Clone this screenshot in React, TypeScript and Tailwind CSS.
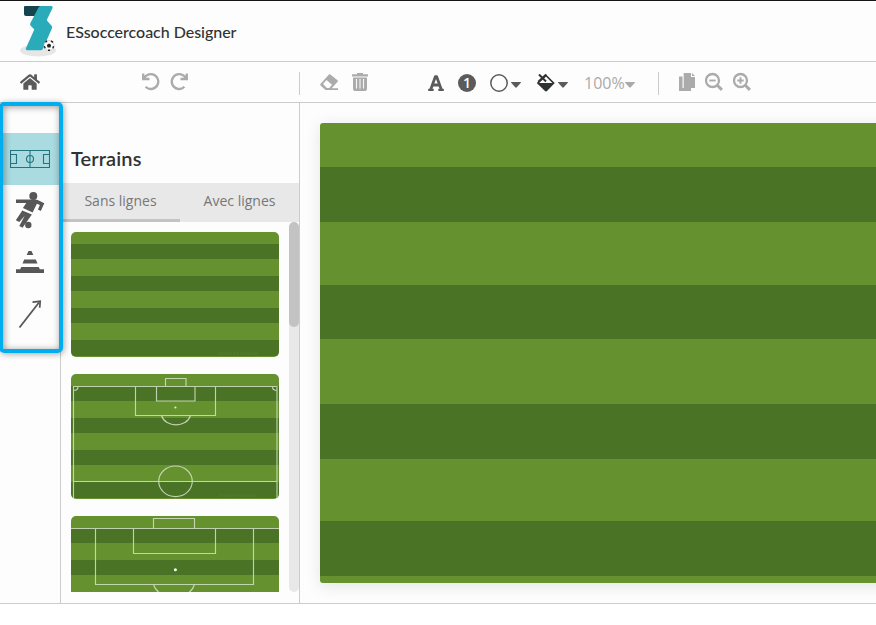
import type { ReactNode } from "react";
import { FaHome, FaFont } from "react-icons/fa";

const LIGHT = "#66912f";
const DARK = "#4a7326";

function Icon({ w, className = "", children }: { w: number; className?: string; children: ReactNode }) {
  return (
    <svg width={w} height={20} viewBox={`0 0 ${w} 20`} fill="none" className={`shrink-0 ${className}`}>
      {children}
    </svg>
  );
}

function Caret({ className = "" }: { className?: string }) {
  return (
    <Icon w={10} className={className}>
      <path d="M.5 10h9q.8 0 .3.8L5.8 15.300q-.8.800-1.600 0L.2 10.800Q-.3 10 .5 10Z" fill="currentColor" />
    </Icon>
  );
}

function Logo() {
  return (
    <svg width={38} height={52} viewBox="0 0 38 52" className="mt-[4px] ml-[19px] shrink-0">
      <ellipse cx="19" cy="45.500" rx="18" ry="6" fill="#e6e6e6" />
      <path d="M6 1h17l-5.500 10H7q-2 0-2-2V2q0-1 1-1Z" fill="#14444d" />
      <path
        d="M21.500 1H32q2.300 0 1.400 2.200L28 14.500q-.3.800.3 1.500l4.300 4.800q1 1.200.3 2.700L23.800 44q-.6 1.200-2 1.200H8.500q-2.400 0-1.500-2.200L15.300 24.500l-3.600-3.700q-1-1.100-.4-2.600L19.500 2.500Q20.300 1 21.500 1Z"
        fill="#2aabb9"
      />
      <circle cx="30" cy="40.500" r="5" fill="#fff" stroke="#bbb" strokeWidth=".6" />
      <path d="m30 38.500 2.200 1.500-.8 2.500h-2.800l-.8-2.500Z" fill="#222" />
      <path d="M26.500 37.200l1.500-1.300M32 35.900l2 1.500M25.300 41.200l.9 2M34.700 41.200l-.9 2M29 45.200h2" stroke="#222" strokeWidth="1.500" />
    </svg>
  );
}

const STRIPES = "bg-[linear-gradient(#66912f_0_12px,#4a7326_12px_27px,#66912f_27px_44px,#4a7326_44px_59px,#66912f_59px_76px,#4a7326_76px_91px,#66912f_91px_108px,#4a7326_108px_124px,#66912f_124px)]";

function Thumb({ children }: { children?: ReactNode }) {
  return (
    <div className={`h-[125px] w-[208px] shrink-0 overflow-hidden rounded-[5px] ${STRIPES}`}>
      <svg width={208} height={125} fill="none" stroke="#d5e2c6" strokeOpacity={0.85} strokeWidth={1.15}>
        <path d="M148 121.500h39" stroke="#5a823a" strokeWidth="3" strokeDasharray="3 1 2 1" opacity=".35" />
        {children}
      </svg>
    </div>
  );
}

const bands: [number, string][] = [
  [44, LIGHT],
  [55, DARK],
  [63, LIGHT],
  [54, DARK],
  [65, LIGHT],
  [55, DARK],
  [62, LIGHT],
  [55, DARK],
  [7, LIGHT],
];

function Toolbar() {
  return (
    <div className="flex h-[41px] items-center border-b border-[#ccc] text-[#5b5b5b]">
      <FaHome className="ml-[20px] h-[20px] w-[20px] shrink-0" />
      <div className="ml-[101px] flex gap-[9px] text-[#ababab]">
        <Icon w={19}>
          <path d="M2.200 1.500V7h6.300M3 6.300C4.700 3.500 7 2.200 10 2.200a7.400 7.400 0 1 1-5.400 12.600" stroke="currentColor" strokeWidth="2.300" />
        </Icon>
        <Icon w={19}>
          <path d="M17.800 1.500V7h-6.300M17 6.300C15.300 3.500 13 2.200 10 2.200a7.400 7.400 0 1 0 5.400 12.600" stroke="currentColor" strokeWidth="2.300" />
        </Icon>
      </div>
      <div className="ml-[111px] h-[23px] w-px shrink-0 translate-y-px bg-[#ccc]" />
      <div className="ml-[20px] flex gap-[13px] text-[#ababab]">
        <Icon w={19}>
          <path
            d="m10.300 2.400 7.200 5.800q.8.700.1 1.500l-5.900 6.500H18V18H5.500L.8 13.800Q-.3 12.700.8 11.600L9 2.500q.6-.7 1.300-.1ZM6.500 8 3 12l3.900 4h2.400l2.700-3.200Z"
            fill="currentColor"
            fillRule="evenodd"
          />
        </Icon>
        <Icon w={16}>
          <path d="M0 2.200h5V1h6v1.200h5V4.500H0ZM1 5.500h14V17q0 2-2 2H3q-2 0-2-2Z" fill="currentColor" />
          <path d="M4.500 7v9.500M8 7v9.500M11.500 7v9.500" stroke="#f6f6f6" strokeWidth="1.100" />
        </Icon>
      </div>
      <FaFont className="ml-[60px] h-[18px] w-[16px] shrink-0 translate-y-px" />
      <div className="ml-[14px] flex h-[18px] w-[18px] shrink-0 translate-y-px items-center justify-center rounded-full bg-[#5b5b5b] font-['Open_Sans',sans-serif] text-[14px] leading-[18px] font-semibold text-white">
        1
      </div>
      <Icon w={19} className="ml-[14px]">
        <circle cx="9" cy="11" r="8.200" stroke="currentColor" strokeWidth="1.500" />
      </Icon>
      <Caret className="ml-[2px]" />
      <Icon w={20} className="ml-[15px] text-[#303333]">
        <path d="m10 3.500 7.500 7.500L10 18.500 2 11Z" stroke="currentColor" strokeWidth="1.700" />
        <path d="M1.500 11h16.800l-7 7.500q-1.300 1.200-2.600 0Z" fill="currentColor" />
        <path d="m3 2.500 7 7M2.300 9.800l7.900-7.300" stroke="currentColor" strokeWidth="2" />
      </Icon>
      <Caret className="ml-[2px]" />
      <span className="ml-[16px] w-[41px] shrink-0 translate-y-px font-['Open_Sans',sans-serif] text-[16px] leading-5 text-[#aaa]">
        100%
      </span>
      <Caret className="text-[#aaa]" />
      <div className="ml-[23px] h-[23px] w-px shrink-0 translate-y-px bg-[#ccc]" />
      <div className="ml-[20px] flex gap-[10px] text-[#ababab]">
        <Icon w={16}>
          <path d="M0 4.500h3.500V16H12v3H0Z" fill="currentColor" />
          <path d="M4.700 1H12v4h4v11H4.700Z" fill="currentColor" />
          <path d="M13 1v3h3Z" fill="currentColor" />
        </Icon>
        <Icon w={18}>
          <circle cx="7.500" cy="8.500" r="6.500" stroke="currentColor" strokeWidth="2.300" />
          <path d="m12.300 13.300 4.600 4.600" stroke="currentColor" strokeWidth="3" />
          <path d="M4.300 8.500h6.400" stroke="currentColor" strokeWidth="1.900" />
        </Icon>
        <Icon w={18}>
          <circle cx="7.500" cy="8.500" r="6.500" stroke="currentColor" strokeWidth="2.300" />
          <path d="m12.300 13.300 4.600 4.600" stroke="currentColor" strokeWidth="3" />
          <path d="M4.300 8.500h6.400M7.500 5.300v6.400" stroke="currentColor" strokeWidth="1.900" />
        </Icon>
      </div>
    </div>
  );
}

function Rail() {
  return (
    <nav className="flex w-[61px] shrink-0 flex-col border-r border-[#ccc] pt-[30px] text-[#575757]">
      <div className="flex h-[52px] items-center justify-center bg-[#a9dbe1]">
        <svg width={40} height={18} fill="none" stroke="#23747e" strokeWidth={1.100} className="shrink-0">
          <path d="M.5.500h39v17H.5ZM20 .500v17M.5 4.500h6v9h-6M39.500 4.500h-6v9h6" />
          <circle cx="20" cy="9" r="3.500" />
        </svg>
      </div>
      <div className="flex h-[52px] items-center justify-center">
        <svg width={30} height={38} viewBox="15 192 30 38" fill="currentColor">
          <circle cx="33.300" cy="196" r="4" />
          <path d="M16 199.500h19q1.500 0 2.700.6l6.600 3.200-3.500 7.700-2.900-1.400 2-4.500-3-1.300-4.300 8.600-9.700-4.300 3.400-5H16Z" />
          <path d="m22.300 210.400 9.600 4.200-9.400 13.200-3.200-1.700 5.300-10.100-5.300 5.900-3.500-1.700Z" />
          <circle cx="28.300" cy="225" r="3.200" />
        </svg>
      </div>
      <div className="-mt-px flex h-[52px] items-center justify-center">
        <svg width={28} height={24} viewBox="0 0 28 24" fill="currentColor">
          <path d="M12.500 1h3l1.800 4h-6.600ZM8.200 9.500h11.600l1.700 4H6.500ZM5.200 17h17.600l1 2.300H28V23H0v-3.700h4.200Z" />
        </svg>
      </div>
      <div className="flex h-[52px] items-center justify-center">
        <svg width={24} height={30} viewBox="0 0 24 30" fill="none" stroke="currentColor">
          <path d="M1.500 28.500 21 3.500" strokeWidth="1.800" />
          <path d="M14.500 3.200 22.200 2.300l-.5 6.500" strokeWidth="1.700" />
        </svg>
      </div>
    </nav>
  );
}

export default function App() {
  return (
    <div className="relative h-[625px] w-[876px] overflow-hidden bg-white font-['Lato',sans-serif]">
      <div className="flex h-[604px] flex-col border-t border-b border-t-[#151515] border-b-[#ccc] bg-[#fdfdfd]">
        <header className="flex h-[61px] shrink-0 border-b border-[#ccc]">
          <Logo />
          <h1 className="mt-[21px] ml-[9px] text-[16px] leading-5 font-medium tracking-[-0.03px] text-[#303333]">ESsoccercoach Designer</h1>
        </header>
        <Toolbar />
        <main className="flex min-h-0 flex-1">
          <Rail />
          <section className="flex w-[239px] shrink-0 flex-col border-r border-[#ccc]">
            <h2 className="h-[80px] shrink-0 pt-[42px] pl-[10px] text-[20px] leading-[26px] font-semibold tracking-[0.1px] text-[#303333]">Terrains</h2>
            <div className="flex h-[39px] shrink-0 bg-[#e8e8e8] font-['Open_Sans',sans-serif] text-[14px] leading-[36px] font-medium text-[#777]">
              <div className="w-[119px] border-b-[3px] border-[#c3c3c3] text-center">Sans lignes</div>
              <div className="w-[119px] text-center">Avec lignes</div>
            </div>
            <div className="flex h-[370px] shrink-0">
              <div className="flex flex-1 flex-col gap-[17px] overflow-hidden pt-[10px] pl-[10px]">
                <Thumb />
                <Thumb>
                  <path d="M94.500 12.500v-8h20.500v8M2.500 124V12.500H206V124M64.500 12.500v29h80v-29M85.500 12.500v14.500H124V12.500M90.500 41.500c4 12.500 25 12.500 29 0M2.500 107.500H206M2.500 16.500q4.500 0 4.500-4M206 16.500q-4.500 0-4.500-4" />
                  <ellipse cx="104.500" cy="107.300" rx="16.800" ry="15.300" />
                  <circle cx="104.400" cy="33.500" r="1.100" fill="#e3ecda" stroke="none" />
                </Thumb>
                <Thumb>
                  <path d="M82.500 12.500v-10h41v10M0 12.500h208M24.500 12.500v56h158v-56M62.500 12.500v25h82v-25M82.500 68.500c5 17 36 17 41 0" />
                  <circle cx="104.400" cy="53.700" r="1.500" fill="#fff" stroke="none" />
                </Thumb>
              </div>
              <div className="w-[10px] rounded-full bg-[#e8e8e8]">
                <div className="h-[105px] rounded-full bg-[#c3c3c3]" />
              </div>
            </div>
          </section>
          <div className="flex-1 overflow-hidden pt-[20px] pl-[20px]">
            <div className="h-[460px] w-[800px] overflow-hidden rounded-[3px] shadow-[0_3px_16px_rgba(0,0,0,0.1)]">
              {bands.map(([height, color], i) => (
                <div key={i} style={{ height, backgroundColor: color }} />
              ))}
            </div>
          </div>
        </main>
      </div>
      <div className="pointer-events-none absolute top-[102px] left-[-1px] h-[251px] w-[64px] rounded-[5px] border-4 border-[#00aeef] shadow-[1px_1px_6px_rgba(0,0,0,0.35),inset_1px_1px_7px_rgba(0,0,0,0.4)]" />
    </div>
  );
}
